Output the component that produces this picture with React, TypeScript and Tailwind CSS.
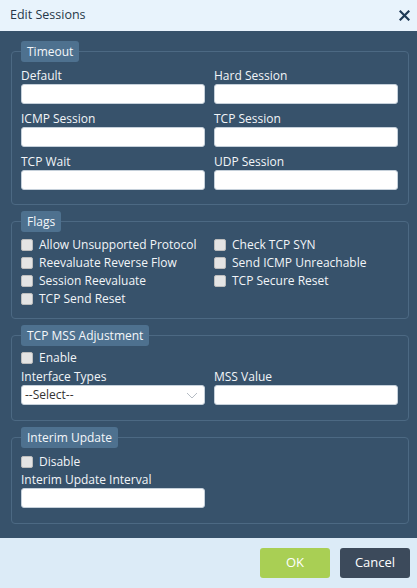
import React from 'react';

const font = { fontFamily: '"Open Sans", "Liberation Sans", sans-serif' };

const TextInput: React.FC = () => (
  <input
    type="text"
    className="block w-full h-[20px] rounded-[3px] border border-[#c5d0da] bg-white px-1 text-[12px] text-[#333] outline-none"
  />
);

const Field: React.FC<{ label: string; children?: React.ReactNode }> = ({ label, children }) => (
  <div className="flex flex-col">
    <label className="block h-[16px] text-[12px] leading-[16px] text-[#f2f5f8]">{label}</label>
    {children || <TextInput />}
  </div>
);

const Check: React.FC<{ label: string }> = ({ label }) => (
  <label className="flex h-[18px] items-center text-[12px] text-[#f2f5f8]">
    <span className="mr-[6px] inline-block h-[12px] w-[12px] rounded-[2px] border border-[#bdbdbd] bg-[#e4e4e4]" />
    {label}
  </label>
);

const Section: React.FC<{ title: string; className?: string; children: React.ReactNode }> = ({
  title,
  className,
  children,
}) => (
  <fieldset className={`rounded-[4px] border border-[#4c6983] pl-[9px] pr-[10px] ${className || ''}`}>
    <legend className="rounded-[3px] bg-[#4e718f] px-[6px] text-[12px] leading-[21px] text-[#f4f7fa]">
      {title}
    </legend>
    {children}
  </fieldset>
);

export default function App() {
  return (
    <div className="flex h-[588px] w-[417px] flex-col overflow-hidden bg-[#37526b]" style={font}>
      {/* Header */}
      <div className="flex h-[31px] items-center justify-between bg-[#e8f3fc] pl-[10px] pr-[7px]">
        <span className="text-[12.5px] text-[#263848]">Edit Sessions</span>
        <svg width="11" height="11" viewBox="0 0 11 11">
          <path d="M1.5 1.5 L9.5 9.5 M9.5 1.5 L1.5 9.5" stroke="#1e3a56" strokeWidth="2.2" strokeLinecap="square" />
        </svg>
      </div>

      {/* Body */}
      <div className="flex flex-1 flex-col gap-[6px] pl-[11px] pr-[8px] pt-[10px]">
        <Section title="Timeout" className="pb-[14px]">
          <div className="grid grid-cols-2 gap-x-[9px] gap-y-[7px] pt-[6px]">
            <Field label="Default" />
            <Field label="Hard Session" />
            <Field label="ICMP Session" />
            <Field label="TCP Session" />
            <Field label="TCP Wait" />
            <Field label="UDP Session" />
          </div>
        </Section>

        <Section title="Flags" className="pb-[10px]">
          <div className="grid grid-cols-2 gap-x-[9px] pt-[4px]">
            <Check label="Allow Unsupported Protocol" />
            <Check label="Check TCP SYN" />
            <Check label="Reevaluate Reverse Flow" />
            <Check label="Send ICMP Unreachable" />
            <Check label="Session Reevaluate" />
            <Check label="TCP Secure Reset" />
            <Check label="TCP Send Reset" />
          </div>
        </Section>

        <Section title="TCP MSS Adjustment" className="pb-[15px]">
          <div className="pt-[3px]">
            <Check label="Enable" />
          </div>
          <div className="mt-[2px] grid grid-cols-2 gap-x-[9px]">
            <Field label="Interface Types">
              <div className="flex h-[20px] items-center justify-between rounded-[3px] border border-[#c5d0da] bg-white pl-[3px] pr-[6px] text-[12px] text-[#333]">
                <span>--Select--</span>
                <svg width="12" height="7" viewBox="0 0 12 7">
                  <path d="M1 1 L6 6 L11 1" fill="none" stroke="#b5bcc4" strokeWidth="1" />
                </svg>
              </div>
            </Field>
            <Field label="MSS Value" />
          </div>
        </Section>

        <Section title="Interim Update" className="pb-[15px]">
          <div className="pt-[5px]">
            <Check label="Disable" />
          </div>
          <div className="mt-[1px] grid grid-cols-2 gap-x-[9px]">
            <Field label="Interim Update Interval" />
          </div>
        </Section>
      </div>

      {/* Footer */}
      <div className="flex h-[50px] items-center justify-end gap-[10px] bg-[#dcebf7] pr-[7px]">
        <button className="h-[30px] w-[70px] rounded-[3px] bg-[#a9cf54] text-[13px] text-white">OK</button>
        <button className="h-[30px] w-[70px] rounded-[3px] bg-[#3c4a5b] text-[13px] text-white">Cancel</button>
      </div>
    </div>
  );
}
